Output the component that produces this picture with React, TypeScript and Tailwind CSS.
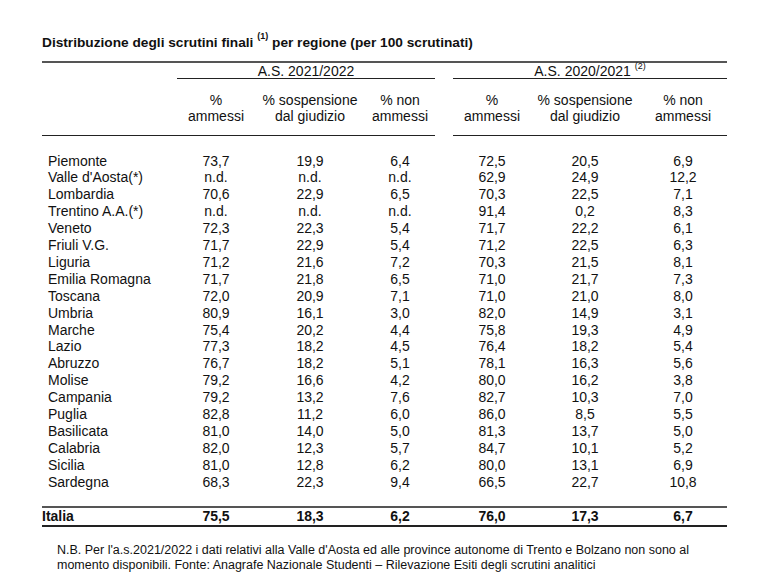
const rows: [string, string, string, string, string, string, string][] = [
  ["Piemonte", "73,7", "19,9", "6,4", "72,5", "20,5", "6,9"],
  ["Valle d'Aosta(*)", "n.d.", "n.d.", "n.d.", "62,9", "24,9", "12,2"],
  ["Lombardia", "70,6", "22,9", "6,5", "70,3", "22,5", "7,1"],
  ["Trentino A.A.(*)", "n.d.", "n.d.", "n.d.", "91,4", "0,2", "8,3"],
  ["Veneto", "72,3", "22,3", "5,4", "71,7", "22,2", "6,1"],
  ["Friuli V.G.", "71,7", "22,9", "5,4", "71,2", "22,5", "6,3"],
  ["Liguria", "71,2", "21,6", "7,2", "70,3", "21,5", "8,1"],
  ["Emilia Romagna", "71,7", "21,8", "6,5", "71,0", "21,7", "7,3"],
  ["Toscana", "72,0", "20,9", "7,1", "71,0", "21,0", "8,0"],
  ["Umbria", "80,9", "16,1", "3,0", "82,0", "14,9", "3,1"],
  ["Marche", "75,4", "20,2", "4,4", "75,8", "19,3", "4,9"],
  ["Lazio", "77,3", "18,2", "4,5", "76,4", "18,2", "5,4"],
  ["Abruzzo", "76,7", "18,2", "5,1", "78,1", "16,3", "5,6"],
  ["Molise", "79,2", "16,6", "4,2", "80,0", "16,2", "3,8"],
  ["Campania", "79,2", "13,2", "7,6", "82,7", "10,3", "7,0"],
  ["Puglia", "82,8", "11,2", "6,0", "86,0", "8,5", "5,5"],
  ["Basilicata", "81,0", "14,0", "5,0", "81,3", "13,7", "5,0"],
  ["Calabria", "82,0", "12,3", "5,7", "84,7", "10,1", "5,2"],
  ["Sicilia", "81,0", "12,8", "6,2", "80,0", "13,1", "6,9"],
  ["Sardegna", "68,3", "22,3", "9,4", "66,5", "22,7", "10,8"],
];

const cols = "grid grid-cols-[135px_78px_110px_70px_18px_78px_108px_88px]";

const Row = ({ r, bold }: { r: string[]; bold?: boolean }) => (
  <div className={`${cols} ${bold ? "font-bold leading-[15px]" : "leading-[16.9px]"}`}>
    <div className={bold ? "" : "pl-[6px]"}>{r[0]}</div>
    <div className="text-center">{r[1]}</div>
    <div className="text-center">{r[2]}</div>
    <div className="text-center">{r[3]}</div>
    <div />
    <div className="text-center">{r[4]}</div>
    <div className="text-center">{r[5]}</div>
    <div className="text-center">{r[6]}</div>
  </div>
);

const App = () => {
  return (
    <div className="w-[767px] h-[577px] bg-white text-[#111] font-['Liberation_Sans',Arial,sans-serif] text-[14px] overflow-hidden">
      <div className="pl-[42px] pt-[35px]">
        <h1 className="font-bold text-[13.7px] leading-[16px]">
          Distribuzione degli scrutini finali <sup className="text-[9px] align-[4px]">(1)</sup> per regione (per 100 scrutinati)
        </h1>
        {/* TABLE */}
        <div className="w-[685px] mt-[10px] border-t-2 border-[#555]">
          <div className={`${cols} leading-[15px]`}>
            <div />
            <div className="col-span-3 text-center border-b border-[#222] h-[16px] pt-[1px]">A.S. 2021/2022</div>
            <div />
            <div className="col-span-3 text-center border-b border-[#222] h-[16px] pt-[1px]">
              A.S. 2020/2021 <sup className="text-[9px] align-[3px]">(2)</sup>
            </div>
          </div>
          <div className={`${cols} leading-[16px]`}>
            <div className="col-span-4 grid grid-cols-[135px_78px_110px_70px] border-b border-[#222] pt-[13px] pb-[11px]">
              <div />
              <div className="text-center">%<br />ammessi</div>
              <div className="text-center">% sospensione<br />dal giudizio</div>
              <div className="text-center">% non<br />ammessi</div>
            </div>
            <div />
            <div className="col-span-3 grid grid-cols-[78px_108px_88px] border-b border-[#222] pt-[13px] pb-[11px]">
              <div className="text-center">%<br />ammessi</div>
              <div className="text-center">% sospensione<br />dal giudizio</div>
              <div className="text-center">% non<br />ammessi</div>
            </div>
          </div>
          {/* DATA */}
          <div className="pt-[16.5px] pb-[15.5px]">
            {rows.map((r) => (
              <Row key={r[0]} r={r} />
            ))}
          </div>
          <div className="border-t-2 border-b-2 border-t-[#555] border-b-[#222] py-[1px]">
            <Row r={["Italia", "75,5", "18,3", "6,2", "76,0", "17,3", "6,7"]} bold />
          </div>
        </div>
        {/* NOTE */}
        <div className="pl-[15px] mt-[16px] text-[12.5px] leading-[15px]">
          N.B. Per l'a.s.2021/2022 i dati relativi alla Valle d'Aosta ed alle province autonome di Trento e Bolzano non sono al
          <br />
          momento disponibili. Fonte: Anagrafe Nazionale Studenti – Rilevazione Esiti degli scrutini analitici
        </div>
      </div>
    </div>
  );
};

export default App;
